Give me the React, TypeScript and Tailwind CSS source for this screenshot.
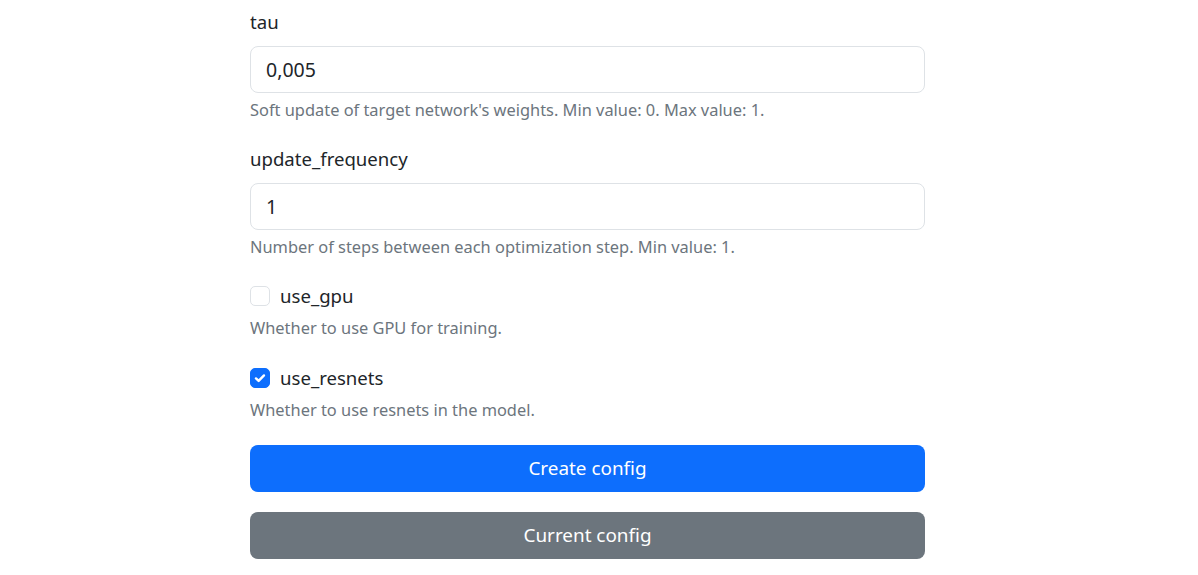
import React from "react";

const font = { fontFamily: '"Noto Sans", "Open Sans", sans-serif' };

function Field({ label, value, help }: { label: string; value: string; help: string }) {
  return (
    <div className="mb-[22px]">
      <div className="text-[18.6px] leading-[30px] text-[#212529] mb-[9px]">{label}</div>
      <div className="h-[47px] rounded-[8px] border border-[#dee2e6] bg-white flex items-center px-[15px] text-[19.5px] text-[#212529]">
        {value}
      </div>
      <div className="mt-[5px] text-[16.4px] leading-[24px] text-[#6c757d]">{help}</div>
    </div>
  );
}

function Check({ label, checked, help }: { label: string; checked: boolean; help: string }) {
  return (
    <div className="mb-[23px]">
      <div className="flex items-center h-[30px]">
        {checked ? (
          <span className="w-[20px] h-[20px] rounded-[5px] bg-[#0d6efd] border border-[#0d6efd] flex items-center justify-center">
            <svg width="16" height="16" viewBox="0 0 20 20">
              <path d="M5 10.5l3.3 3.2L15 6.8" fill="none" stroke="#fff" strokeWidth="3" strokeLinecap="round" strokeLinejoin="round" />
            </svg>
          </span>
        ) : (
          <span className="w-[20px] h-[20px] rounded-[5px] bg-white border border-[#dee2e6]" />
        )}
        <span className="ml-[10px] text-[18.6px] leading-[30px] text-[#212529]">{label}</span>
      </div>
      <div className="mt-[5px] text-[16.4px] leading-[24px] text-[#6c757d]">{help}</div>
    </div>
  );
}

export default function App() {
  return (
    <div className="min-h-[575px] bg-white overflow-hidden" style={font}>
      <div className="ml-[250px] w-[675px] pt-[7px]">
        <Field label="tau" value="0,005" help="Soft update of target network's weights. Min value: 0. Max value: 1." />
        <Field label="update_frequency" value="1" help="Number of steps between each optimization step. Min value: 1." />
        <Check label="use_gpu" checked={false} help="Whether to use GPU for training." />
        <Check label="use_resnets" checked={true} help="Whether to use resnets in the model." />
        <button className="block w-full h-[47px] rounded-[8px] bg-[#0d6efd] text-white text-[18.9px]">Create config</button>
        <button className="block w-full h-[47px] rounded-[8px] bg-[#6c757d] text-white text-[18.9px] mt-[20px]">Current config</button>
      </div>
    </div>
  );
}
